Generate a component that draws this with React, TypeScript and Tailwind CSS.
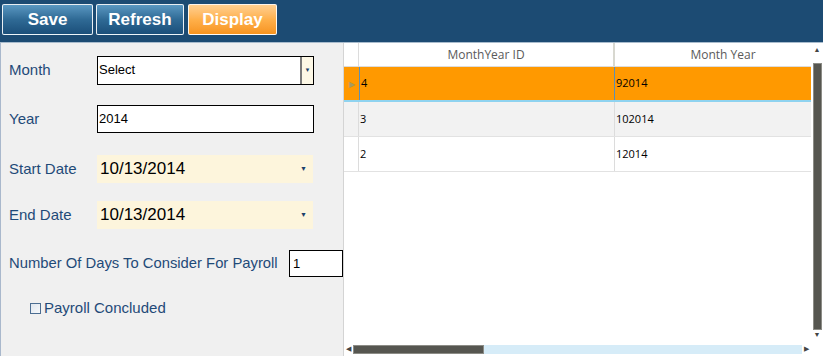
import { useState } from 'react';

interface Row {
  id: string;
  monthYear: string;
}

const rows: Row[] = [
  { id: '4', monthYear: '92014' },
  { id: '3', monthYear: '102014' },
  { id: '2', monthYear: '12014' },
];

const sans = "font-['Liberation_Sans',Arial,sans-serif]";
const grid = "font-['Open_Sans','Noto_Sans',sans-serif]";

function ToolButton({ label, active }: { label: string; active?: boolean }) {
  return (
    <button
      className={`w-full h-[31px] border border-white/90 rounded-[2px] text-white font-bold text-[17px] ${sans} ${
        active
          ? 'bg-gradient-to-b from-[#ffcf8f] via-[#ffb04a] to-[#f7941d]'
          : 'bg-gradient-to-b from-[#5a98c2] via-[#2f6a95] to-[#1b4f7a]'
      }`}
    >
      {label}
    </button>
  );
}

function DateField({ value }: { value: string }) {
  return (
    <div className="w-[216px] h-[28px] bg-[#fdf5dc] flex items-center justify-between pl-[3px] pr-[6px]">
      <span className={`text-[17px] text-black ${sans}`}>{value}</span>
      <span className="text-[7px] text-[#1b3f6a]">▼</span>
    </div>
  );
}

export default function App() {
  const [concluded, setConcluded] = useState(false);
  const [selected, setSelected] = useState(0);

  return (
    <div className={`w-[823px] h-[356px] overflow-hidden bg-white flex flex-col ${sans}`}>
      {/* Toolbar */}
      <div className="h-[43px] shrink-0 bg-[#1c4b73] flex items-center gap-[3px] pl-[2px] pb-[3px] border-b border-[#a9bccd]">
        <div className="w-[91px]"><ToolButton label="Save" /></div>
        <div className="w-[88px]"><ToolButton label="Refresh" /></div>
        <div className="w-[89px] ml-[1px]"><ToolButton label="Display" active /></div>
      </div>

      <div className="flex flex-1 min-h-0">
        {/* Form */}
        <div className="w-[344px] bg-[#f0f0f0] border-l border-[#a9b8cc] border-r border-r-[#d4d4d4] flex flex-col text-[#1f4a78] text-[15px]">
          <div className="flex items-center h-[28px] mt-[13px]">
            <span className="w-[96px] pl-[8px]">Month</span>
            <div className="w-[217px] h-[29px] border border-black bg-white flex">
              <span className="flex-1 pl-[1px] text-[13px] text-black flex items-center">Select</span>
              <span className="w-[13px] bg-[#fdf8e6] border-l-2 border-[#7a7a7a] flex items-center justify-center text-[6px] text-[#1b3f6a]">▼</span>
            </div>
          </div>
          <div className="flex items-center h-[28px] mt-[21px]">
            <span className="w-[96px] pl-[8px]">Year</span>
            <div className="w-[217px] h-[28px] border border-black bg-white flex items-center pl-[1px] text-[13px] text-black">2014</div>
          </div>
          <div className="flex items-center h-[28px] mt-[22px]">
            <span className="w-[96px] pl-[8px]">Start Date</span>
            <DateField value="10/13/2014" />
          </div>
          <div className="flex items-center h-[28px] mt-[18px]">
            <span className="w-[96px] pl-[8px]">End Date</span>
            <DateField value="10/13/2014" />
          </div>
          <div className="flex items-center h-[27px] mt-[21px]">
            <span className="pl-[8px] w-[288px] text-[14.8px]">Number Of Days To Consider For Payroll</span>
            <div className="w-[54px] h-[27px] border border-black bg-white flex items-center pl-[3px] text-[13px] text-black">1</div>
          </div>
          <label className="flex items-center mt-[20px] pl-[29px] gap-[3px] cursor-pointer">
            <input
              type="checkbox"
              checked={concluded}
              onChange={() => setConcluded(!concluded)}
              className="appearance-none w-[11px] h-[11px] border border-[#4b6d92] bg-gradient-to-br from-[#dfe6ee] to-[#f6f8fa]"
            />
            <span>Payroll Concluded</span>
          </label>
        </div>

        {/* Grid */}
        <div className={`flex-1 flex flex-col bg-white ${grid}`}>
          <div className="flex flex-1 min-h-0">
            <div className="flex-1 flex flex-col">
              <div className="flex h-[24px] border-b border-[#dcdcdc] text-[12px] text-[#5a5a5a]">
                <div className="w-[15px] border-r border-[#dcdcdc]" />
                <div className="w-[256px] border-r-2 border-[#d8d8d0] flex items-center justify-center">MonthYear ID</div>
                <div className="flex-1 flex items-center justify-center pl-[20px]">Month Year</div>
              </div>
              {rows.map((r, i) => {
                const sel = i === selected;
                return (
                  <div
                    key={r.id}
                    onClick={() => setSelected(i)}
                    className={`flex h-[35px] text-[11px] text-black border-b ${
                      sel
                        ? 'bg-[#ff9900] border-b-2 border-[#8fd3f0]'
                        : i % 2 === 1
                          ? 'bg-[#f2f2f2] border-[#e2e2e2]'
                          : 'bg-white border-[#e2e2e2]'
                    }`}
                  >
                    <div className={`w-[15px] flex items-center justify-center ${sel ? '' : 'border-r border-[#dcdcdc]'}`}>
                      {sel && <span className="text-[8px] text-[#a89a60]">▶</span>}
                    </div>
                    <div className={`w-[256px] flex items-center pl-[1px] border-r ${sel ? 'border-[#5b8fb4] border-l' : 'border-[#dcdcdc]'}`}>{r.id}</div>
                    <div className="flex-1 flex items-center pl-[1px]">{r.monthYear}</div>
                  </div>
                );
              })}
            </div>
            {/* vertical scrollbar */}
            <div className="w-[12px] flex flex-col items-center pt-[2px] pb-[2px] bg-white">
              <span className="text-[7px] leading-[10px] text-[#444]">▲</span>
              <div className="w-[9px] flex-1 mt-[8px] bg-[#565650] border border-[#8c8c86]" />
              <span className="text-[7px] leading-[10px] text-[#444]">▼</span>
            </div>
          </div>
          {/* horizontal scrollbar */}
          <div className="h-[14px] flex items-center pl-[2px] pr-[14px] gap-[2px]">
            <span className="text-[7px] text-[#444]">◀</span>
            <div className="flex-1 h-[9px] bg-[#d6ecf8] flex">
              <div className="w-[131px] h-full bg-[#565650] border border-[#8c8c86]" />
            </div>
            <span className="text-[7px] text-[#444]">▶</span>
          </div>
        </div>
      </div>
    </div>
  );
}
